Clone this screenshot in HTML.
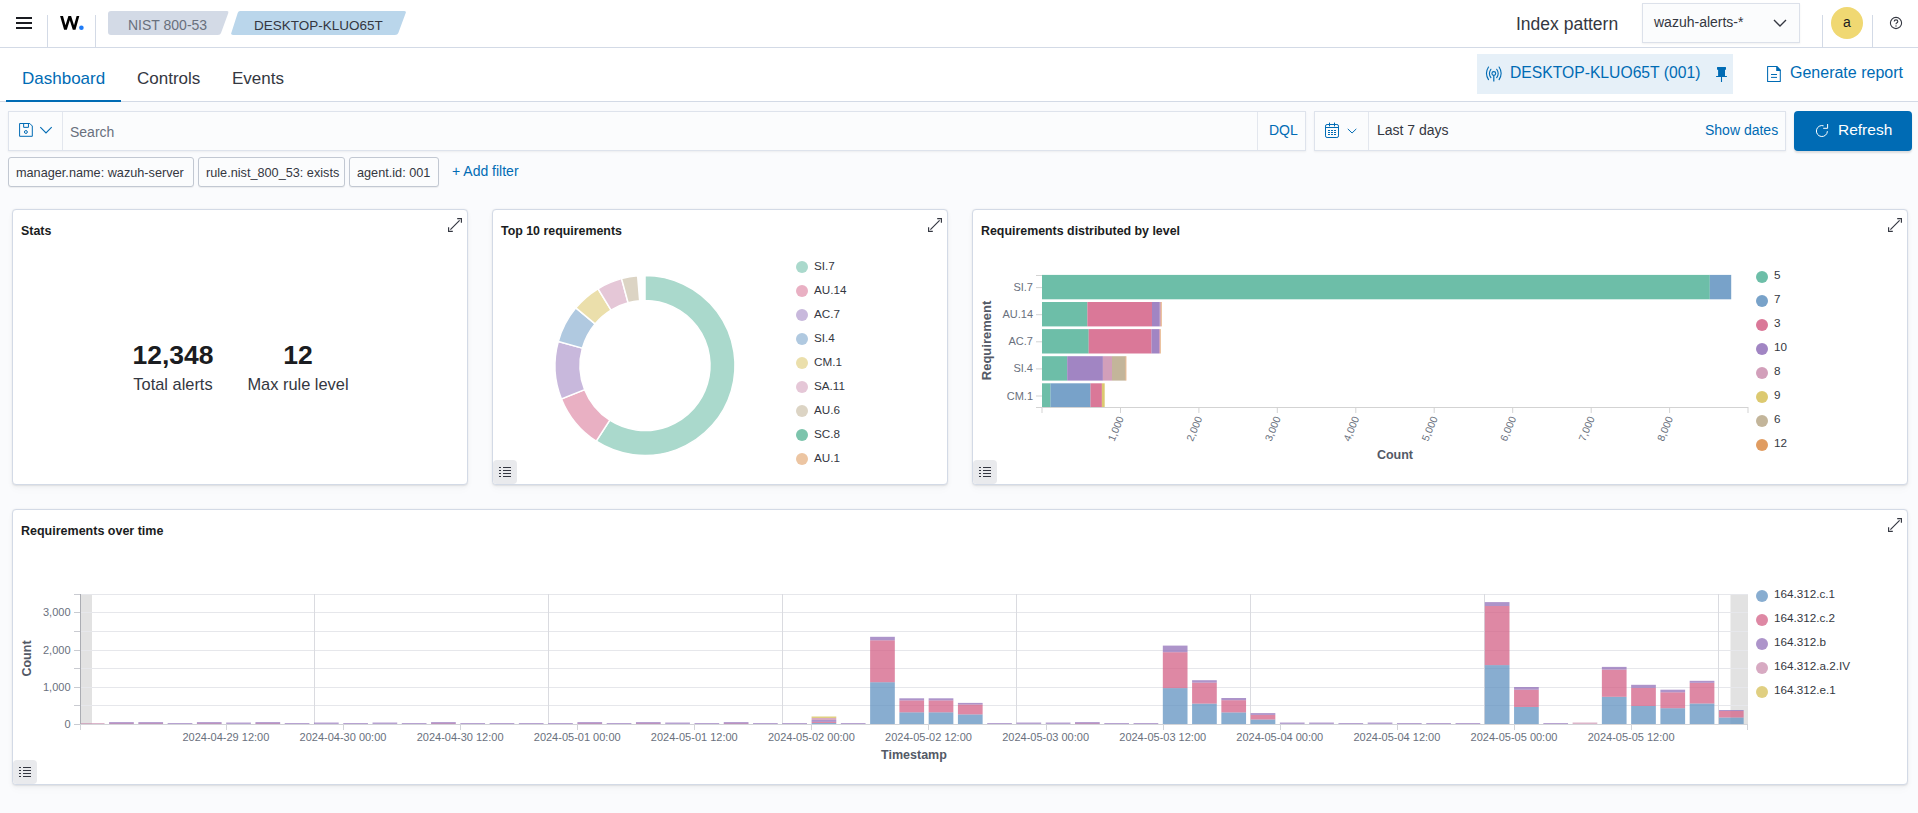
<!DOCTYPE html>
<html><head><meta charset="utf-8">
<style>
*{box-sizing:border-box;margin:0;padding:0}
html,body{width:1918px;height:813px;overflow:hidden}
body{background:#FAFBFD;font-family:"Liberation Sans",sans-serif;color:#343741;position:relative}
.a{position:absolute;white-space:nowrap}
.hdr{position:absolute;left:0;top:0;width:1918px;height:48px;background:#fff;border-bottom:1px solid #D3DAE6}
.tabs{position:absolute;left:0;top:48px;width:1918px;height:54px;background:#fff;border-bottom:1px solid #D3DAE6}
.vsep{position:absolute;top:15px;width:1px;height:33px;background:#D3DAE6}
.panel{position:absolute;background:#fff;border:1px solid #D3DAE6;border-radius:4px;box-shadow:0 .7px 1.4px rgba(0,0,0,.07),0 1.9px 4px rgba(0,0,0,.04),0 4.5px 10px rgba(0,0,0,.02)}
.ptitle{position:absolute;left:8px;top:13px;font-size:12.4px;font-weight:bold;color:#1a1c21}
.exp{position:absolute;width:14px;height:14px}
.listbtn{position:absolute;width:24px;height:24px;background:#E9EAED;border-radius:4px}
.pill{position:absolute;top:157px;height:30px;background:#FBFCFD;border:1px solid #C2C8D2;border-radius:3px;font-size:12.7px;line-height:30px;padding-left:7px;color:#343741;box-shadow:0 1px 1px rgba(0,0,0,.06)}
.box{position:absolute;background:#FBFCFD;border:1px solid #DEE3EC;box-shadow:0 1px 2px rgba(0,0,0,.06)}
</style></head><body>
<div class="hdr"></div>
<!-- hamburger -->
<div class="a" style="left:16px;top:17px;width:16px;height:2px;background:#1a1c21"></div>
<div class="a" style="left:16px;top:22px;width:16px;height:2px;background:#1a1c21"></div>
<div class="a" style="left:16px;top:27px;width:16px;height:2px;background:#1a1c21"></div>
<div class="vsep" style="left:47px"></div>
<div class="vsep" style="left:95px"></div>
<svg class="a" style="left:0;top:0" width="90" height="40"><path d="M60.1 16 L63 16 L65.5 25.2 L68.4 16 L71.1 16 L74.05 25.26 L76.6 16 L79.3 16 L75.5 29.8 L72.8 29.8 L69.77 20.3 L66.8 29.8 L64.1 29.8Z" fill="#000"/><circle cx="81.4" cy="27.7" r="2.3" fill="#1E7BF7"/></svg>

<svg class="a" style="left:100px;top:8px" width="320" height="30">
<path d="M11 3 H127 Q129 3 128.3 5 L121 25 Q120.4 27 118 27 H11 Q8 27 8 24 V6 Q8 3 11 3Z" fill="#D3DAE6"/>
<path d="M140 3 H304 Q306.5 3 305.7 5 L298.3 25 Q297.6 27 295 27 H133 Q130.5 27 131.3 25 L137.7 5 Q138.4 3 140 3Z" fill="#BAD6EB"/>
</svg>
<div class="a" style="left:128px;top:16.5px;font-size:14px;line-height:17px;color:#69707D">NIST 800-53</div>
<div class="a" style="left:254px;top:16.5px;font-size:13.5px;line-height:17px;color:#343741">DESKTOP-KLUO65T</div>
<div class="a" style="left:1516px;top:14px;font-size:17.5px;line-height:20px;color:#343741">Index pattern</div>
<div class="box" style="left:1642px;top:3px;width:158px;height:40px;border-color:#DCE1EA"></div>
<div class="a" style="left:1654px;top:14px;font-size:14px;line-height:17px;color:#343741">wazuh-alerts-*</div>
<svg class="a" style="left:1772px;top:17px" width="16" height="12"><path d="M2 3 L8 9 L14 3" fill="none" stroke="#343741" stroke-width="1.4"/></svg>
<div class="vsep" style="left:1822px"></div>
<div class="a" style="left:1831px;top:7px;width:32px;height:32px;border-radius:50%;background:#F0D872;text-align:center;font-size:14px;line-height:31px;color:#1a1c21">a</div>
<div class="vsep" style="left:1872px"></div>
<svg class="a" style="left:1888px;top:15px" width="16" height="16"><circle cx="8" cy="8" r="5.6" fill="none" stroke="#343741" stroke-width="1.1"/><path d="M6.2 6.6 Q6.2 4.9 8 4.9 Q9.8 4.9 9.8 6.5 Q9.8 7.5 8.6 8 Q8 8.3 8 9.2" fill="none" stroke="#343741" stroke-width="1.1"/><circle cx="8" cy="11" r=".7" fill="#343741"/></svg>

<div class="tabs"></div>
<div class="a" style="left:22px;top:69px;font-size:17px;line-height:20px;color:#006BB4">Dashboard</div>
<div class="a" style="left:6px;top:100px;width:115px;height:2px;background:#006BB4"></div>
<div class="a" style="left:137px;top:69px;font-size:17px;line-height:20px;color:#343741">Controls</div>
<div class="a" style="left:232px;top:69px;font-size:17px;line-height:20px;color:#343741">Events</div>
<div class="a" style="left:1477px;top:54px;width:256px;height:40px;background:#E6F0F8"></div>
<svg class="a" style="left:1485px;top:66px" width="18" height="18">
<circle cx="8.8" cy="7.5" r="1.9" fill="none" stroke="#006BB4" stroke-width="1.1"/><path d="M8.8 9.4 V15.4" stroke="#006BB4" stroke-width="1.2"/>
<path d="M5.9 3.3 Q2.9 7.4 5.9 11.6 M11.7 3.3 Q14.7 7.4 11.7 11.6 M3.5 1 Q-0.6 7.3 3.5 13.6 M14.1 1 Q18.2 7.3 14.1 13.6" fill="none" stroke="#006BB4" stroke-width="1.1" stroke-linecap="round"/></svg>
<div class="a" style="left:1510px;top:63px;font-size:15.7px;line-height:19px;color:#006BB4">DESKTOP-KLUO65T (001)</div>
<svg class="a" style="left:1714px;top:66px" width="16" height="18"><path d="M3.5 1.1 H11.5 Q12 1.1 12 1.6 V3.2 Q12 3.7 11.5 3.7 H11 V10 H12.9 V10.9 H2.1 V10 H4.1 V3.7 H3.5 Q3 3.7 3 3.2 V1.6 Q3 1.1 3.5 1.1Z" fill="#006BB4"/><path d="M7.5 10.9 V16" stroke="#006BB4" stroke-width="1.1"/></svg>
<svg class="a" style="left:1765px;top:65px" width="18" height="18"><path d="M2.6 1.5 H11.8 L15.3 5.2 V16.4 H2.6 Z" fill="none" stroke="#006BB4" stroke-width="1.05" stroke-linejoin="round"/><path d="M11.2 1.1 L12 1.1 L15.7 5 V5.9 H11.2 Z" fill="#006BB4"/><path d="M6 9.5 H12 M6 12.4 H12" stroke="#006BB4" stroke-width="1"/></svg>
<div class="a" style="left:1790px;top:63px;font-size:16px;line-height:19px;color:#006BB4">Generate report</div>

<!-- search -->
<div class="box" style="left:8px;top:111px;width:1298px;height:40px"></div>
<div class="a" style="left:62px;top:112px;width:1px;height:38px;background:#E3E7EE"></div>
<svg class="a" style="left:17px;top:121px" width="40" height="20">
<path d="M2.6 2.5 H12.8 L15.3 5 V15.3 H2.6 Z" fill="none" stroke="#006BB4" stroke-width="1" stroke-linejoin="round"/><path d="M6.65 2.5 V6.35 H11.45 V2.5" fill="none" stroke="#006BB4" stroke-width="1"/><circle cx="8.9" cy="11" r="1.45" fill="none" stroke="#006BB4" stroke-width="1"/>
<path d="M23.3 6.2 L29 11.9 L34.7 6.2" fill="none" stroke="#006BB4" stroke-width="1.1"/></svg>
<div class="a" style="left:70px;top:124px;font-size:14px;line-height:17px;color:#69707D">Search</div>
<div class="a" style="left:1257px;top:112px;width:1px;height:38px;background:#E3E7EE"></div>
<div class="a" style="left:1269px;top:122px;font-size:14px;line-height:17px;color:#006BB4">DQL</div>
<div class="box" style="left:1314px;top:111px;width:472px;height:40px"></div>
<div class="a" style="left:1368px;top:112px;width:1px;height:38px;background:#E3E7EE"></div>
<svg class="a" style="left:1323px;top:121px" width="40" height="20">
<rect x="2.5" y="3.5" width="13" height="13" rx="1.6" fill="none" stroke="#006BB4" stroke-width="1"/><path d="M2.5 6.5 H15.5" stroke="#006BB4" stroke-width="1"/><path d="M6.5 2 V5 M11.5 2 V5" stroke="#006BB4" stroke-width="1" stroke-linecap="round"/>
<path d="M5 9.5 H7 M8 9.5 H10 M11 9.5 H13 M5 11.5 H7 M8 11.5 H10 M11 11.5 H13 M5 13.5 H7 M8 13.5 H10 M11 13.5 H13" stroke="#006BB4" stroke-width="1"/>
<path d="M24.8 7.9 L29.05 12 L33.3 7.9" fill="none" stroke="#006BB4" stroke-width="1"/></svg>
<div class="a" style="left:1377px;top:122px;font-size:14px;line-height:17px;color:#343741">Last 7 days</div>
<div class="a" style="left:1705px;top:122px;font-size:14px;line-height:17px;color:#006BB4">Show dates</div>
<div class="a" style="left:1794px;top:111px;width:118px;height:40px;background:#006BB4;border-radius:4px;box-shadow:0 2px 2px rgba(0,0,0,.12)"></div>
<svg class="a" style="left:1814px;top:122px" width="18" height="18"><path d="M9.6 3.8 A5.5 5.5 0 1 0 13.4 9.2" fill="none" stroke="#fff" stroke-width="1"/><path d="M9.2 6.3 H13.6 V2" fill="none" stroke="#fff" stroke-width="1"/></svg>
<div class="a" style="left:1838px;top:120px;font-size:15.5px;line-height:19px;color:#fff">Refresh</div>

<!-- filters -->
<div class="pill" style="left:8px;width:186px">manager.name: wazuh-server</div>
<div class="pill" style="left:198px;width:147px">rule.nist_800_53: exists</div>
<div class="pill" style="left:349px;width:90px">agent.id: 001</div>
<div class="a" style="left:452px;top:163px;font-size:14px;line-height:17px;color:#006BB4">+ Add filter</div>

<div class="panel" style="left:12px;top:209px;width:456px;height:276px"><div class="ptitle" style="top:14px">Stats</div></div>
<svg class="exp" style="left:448px;top:218px" width="14" height="14" viewBox="0 0 14 14"><path d="M9.2 0.6 H13.4 V4.8 M11.6 2.4 L2.4 11.6 M0.6 9.2 V13.4 H4.8" fill="none" stroke="#343741" stroke-width="1.15"/></svg>
<div class="a" style="left:132px;top:339px;width:82px;text-align:center;font-size:26.5px;font-weight:bold;line-height:32px;color:#1a1c21">12,348</div>
<div class="a" style="left:122px;top:374px;width:102px;text-align:center;font-size:16.4px;line-height:20px;color:#343741">Total alerts</div>
<div class="a" style="left:248px;top:339px;width:100px;text-align:center;font-size:26.5px;font-weight:bold;line-height:32px;color:#1a1c21">12</div>
<div class="a" style="left:238px;top:374px;width:120px;text-align:center;font-size:16.4px;line-height:20px;color:#343741">Max rule level</div>
<div class="panel" style="left:492px;top:209px;width:456px;height:276px"><div class="ptitle" style="top:14px">Top 10 requirements</div></div>
<svg class="exp" style="left:928px;top:218px" width="14" height="14" viewBox="0 0 14 14"><path d="M9.2 0.6 H13.4 V4.8 M11.6 2.4 L2.4 11.6 M0.6 9.2 V13.4 H4.8" fill="none" stroke="#343741" stroke-width="1.15"/></svg>
<div class="listbtn" style="left:493px;top:460px"></div><svg class="a" style="left:493px;top:460px" width="23" height="23"><path d="M6 7.5 H8 M10 7.5 H18" stroke="#343741" stroke-width="1.1"/><path d="M6 10.5 H8 M10 10.5 H18" stroke="#343741" stroke-width="1.1"/><path d="M6 13.5 H8 M10 13.5 H18" stroke="#343741" stroke-width="1.1"/><path d="M6 16.5 H8 M10 16.5 H18" stroke="#343741" stroke-width="1.1"/></svg>
<svg class="a" style="left:0;top:0" width="1918" height="813"><path d="M645.00 275.50 A90 90 0 1 1 596.25 441.15 L609.79 420.14 A65 65 0 1 0 645.00 300.50 Z" fill="#AAD9CC" stroke="#fff" stroke-width="1.5"/><path d="M596.25 441.15 A90 90 0 0 1 561.44 398.92 L584.65 389.64 A65 65 0 0 0 609.79 420.14 Z" fill="#E9B0C3" stroke="#fff" stroke-width="1.5"/><path d="M561.44 398.92 A90 90 0 0 1 558.27 341.45 L582.36 348.13 A65 65 0 0 0 584.65 389.64 Z" fill="#C8B8DC" stroke="#fff" stroke-width="1.5"/><path d="M558.27 341.45 A90 90 0 0 1 575.85 307.89 L595.06 323.89 A65 65 0 0 0 582.36 348.13 Z" fill="#B0C9E0" stroke="#fff" stroke-width="1.5"/><path d="M575.85 307.89 A90 90 0 0 1 597.98 288.76 L611.04 310.08 A65 65 0 0 0 595.06 323.89 Z" fill="#EBDFAB" stroke="#fff" stroke-width="1.5"/><path d="M597.98 288.76 A90 90 0 0 1 621.55 278.61 L628.07 302.74 A65 65 0 0 0 611.04 310.08 Z" fill="#E5C7D7" stroke="#fff" stroke-width="1.5"/><path d="M621.55 278.61 A90 90 0 0 1 637.63 275.80 L639.67 300.72 A65 65 0 0 0 628.07 302.74 Z" fill="#DCD4C4" stroke="#fff" stroke-width="1.5"/></svg>
<div class="a" style="left:796px;top:261px;width:12px;height:12px;border-radius:50%;background:#AAD9CC"></div>
<div class="a" style="left:814px;top:259px;font-size:11.7px;line-height:14px;color:#343741">SI.7</div>
<div class="a" style="left:796px;top:285px;width:12px;height:12px;border-radius:50%;background:#E9B0C3"></div>
<div class="a" style="left:814px;top:283px;font-size:11.7px;line-height:14px;color:#343741">AU.14</div>
<div class="a" style="left:796px;top:309px;width:12px;height:12px;border-radius:50%;background:#C8B8DC"></div>
<div class="a" style="left:814px;top:307px;font-size:11.7px;line-height:14px;color:#343741">AC.7</div>
<div class="a" style="left:796px;top:333px;width:12px;height:12px;border-radius:50%;background:#B0C9E0"></div>
<div class="a" style="left:814px;top:331px;font-size:11.7px;line-height:14px;color:#343741">SI.4</div>
<div class="a" style="left:796px;top:357px;width:12px;height:12px;border-radius:50%;background:#EBDFAB"></div>
<div class="a" style="left:814px;top:355px;font-size:11.7px;line-height:14px;color:#343741">CM.1</div>
<div class="a" style="left:796px;top:381px;width:12px;height:12px;border-radius:50%;background:#E5C7D7"></div>
<div class="a" style="left:814px;top:379px;font-size:11.7px;line-height:14px;color:#343741">SA.11</div>
<div class="a" style="left:796px;top:405px;width:12px;height:12px;border-radius:50%;background:#DCD4C4"></div>
<div class="a" style="left:814px;top:403px;font-size:11.7px;line-height:14px;color:#343741">AU.6</div>
<div class="a" style="left:796px;top:429px;width:12px;height:12px;border-radius:50%;background:#7CC4AC"></div>
<div class="a" style="left:814px;top:427px;font-size:11.7px;line-height:14px;color:#343741">SC.8</div>
<div class="a" style="left:796px;top:453px;width:12px;height:12px;border-radius:50%;background:#ECC5A2"></div>
<div class="a" style="left:814px;top:451px;font-size:11.7px;line-height:14px;color:#343741">AU.1</div>
<div class="panel" style="left:972px;top:209px;width:936px;height:276px"><div class="ptitle" style="top:14px">Requirements distributed by level</div></div>
<svg class="exp" style="left:1888px;top:218px" width="14" height="14" viewBox="0 0 14 14"><path d="M9.2 0.6 H13.4 V4.8 M11.6 2.4 L2.4 11.6 M0.6 9.2 V13.4 H4.8" fill="none" stroke="#343741" stroke-width="1.15"/></svg>
<div class="listbtn" style="left:973px;top:460px"></div><svg class="a" style="left:973px;top:460px" width="23" height="23"><path d="M6 7.5 H8 M10 7.5 H18" stroke="#343741" stroke-width="1.1"/><path d="M6 10.5 H8 M10 10.5 H18" stroke="#343741" stroke-width="1.1"/><path d="M6 13.5 H8 M10 13.5 H18" stroke="#343741" stroke-width="1.1"/><path d="M6 16.5 H8 M10 16.5 H18" stroke="#343741" stroke-width="1.1"/></svg>
<svg class="a" style="left:0;top:0" width="1918" height="813" font-family="Liberation Sans"><rect x="1042.00" y="274.90" width="667.80" height="24.4" fill="#54B399" fill-opacity="0.85"/><rect x="1709.80" y="274.90" width="21.40" height="24.4" fill="#6092C0" fill-opacity="0.85"/><line x1="1036" x2="1042" y1="287.6" y2="287.6" stroke="#D3D3D3" stroke-width="1"/><text x="1033" y="291.1" font-size="11" fill="#69707D" text-anchor="end">SI.7</text><rect x="1042.00" y="302.00" width="45.40" height="24.4" fill="#54B399" fill-opacity="0.85"/><rect x="1087.40" y="302.00" width="64.60" height="24.4" fill="#D36086" fill-opacity="0.85"/><rect x="1152.00" y="302.00" width="7.80" height="24.4" fill="#9170B8" fill-opacity="0.85"/><rect x="1159.80" y="302.00" width="1.00" height="24.4" fill="#CA8EAE" fill-opacity="0.85"/><rect x="1160.80" y="302.00" width="0.80" height="24.4" fill="#DA8B45" fill-opacity="0.85"/><line x1="1036" x2="1042" y1="314.7" y2="314.7" stroke="#D3D3D3" stroke-width="1"/><text x="1033" y="318.2" font-size="11" fill="#69707D" text-anchor="end">AU.14</text><rect x="1042.00" y="329.10" width="46.70" height="24.4" fill="#54B399" fill-opacity="0.85"/><rect x="1088.70" y="329.10" width="62.80" height="24.4" fill="#D36086" fill-opacity="0.85"/><rect x="1151.50" y="329.10" width="7.50" height="24.4" fill="#9170B8" fill-opacity="0.85"/><rect x="1159.00" y="329.10" width="1.00" height="24.4" fill="#CA8EAE" fill-opacity="0.85"/><rect x="1160.00" y="329.10" width="0.60" height="24.4" fill="#DA8B45" fill-opacity="0.85"/><line x1="1036" x2="1042" y1="341.8" y2="341.8" stroke="#D3D3D3" stroke-width="1"/><text x="1033" y="345.3" font-size="11" fill="#69707D" text-anchor="end">AC.7</text><rect x="1042.00" y="356.20" width="25.20" height="24.4" fill="#54B399" fill-opacity="0.85"/><rect x="1067.20" y="356.20" width="35.70" height="24.4" fill="#9170B8" fill-opacity="0.85"/><rect x="1102.90" y="356.20" width="9.10" height="24.4" fill="#CA8EAE" fill-opacity="0.85"/><rect x="1112.00" y="356.20" width="13.60" height="24.4" fill="#B9A888" fill-opacity="0.85"/><rect x="1125.60" y="356.20" width="0.70" height="24.4" fill="#DA8B45" fill-opacity="0.85"/><line x1="1036" x2="1042" y1="368.9" y2="368.9" stroke="#D3D3D3" stroke-width="1"/><text x="1033" y="372.4" font-size="11" fill="#69707D" text-anchor="end">SI.4</text><rect x="1042.00" y="383.30" width="8.50" height="24.4" fill="#54B399" fill-opacity="0.85"/><rect x="1050.50" y="383.30" width="40.00" height="24.4" fill="#6092C0" fill-opacity="0.85"/><rect x="1090.50" y="383.30" width="11.40" height="24.4" fill="#D36086" fill-opacity="0.85"/><rect x="1101.90" y="383.30" width="2.80" height="24.4" fill="#D6BF57" fill-opacity="0.85"/><line x1="1036" x2="1042" y1="396.0" y2="396.0" stroke="#D3D3D3" stroke-width="1"/><text x="1033" y="399.5" font-size="11" fill="#69707D" text-anchor="end">CM.1</text><line x1="1036" x2="1042" y1="275.5" y2="275.5" stroke="#D3D3D3"/><line x1="1036" x2="1042" y1="407.5" y2="407.5" stroke="#D3D3D3"/><line x1="1042" x2="1748" y1="407.5" y2="407.5" stroke="#D3D3D3"/><line x1="1042.0" x2="1042.0" y1="407" y2="413" stroke="#D3D3D3"/><line x1="1120.5" x2="1120.5" y1="407" y2="413" stroke="#D3D3D3"/><text transform="translate(1121.2 417) rotate(-68)" font-size="10.3" fill="#69707D" text-anchor="end" dy="3">1,000</text><line x1="1198.9" x2="1198.9" y1="407" y2="413" stroke="#D3D3D3"/><text transform="translate(1199.7 417) rotate(-68)" font-size="10.3" fill="#69707D" text-anchor="end" dy="3">2,000</text><line x1="1277.3" x2="1277.3" y1="407" y2="413" stroke="#D3D3D3"/><text transform="translate(1278.1 417) rotate(-68)" font-size="10.3" fill="#69707D" text-anchor="end" dy="3">3,000</text><line x1="1355.8" x2="1355.8" y1="407" y2="413" stroke="#D3D3D3"/><text transform="translate(1356.6 417) rotate(-68)" font-size="10.3" fill="#69707D" text-anchor="end" dy="3">4,000</text><line x1="1434.2" x2="1434.2" y1="407" y2="413" stroke="#D3D3D3"/><text transform="translate(1435.0 417) rotate(-68)" font-size="10.3" fill="#69707D" text-anchor="end" dy="3">5,000</text><line x1="1512.7" x2="1512.7" y1="407" y2="413" stroke="#D3D3D3"/><text transform="translate(1513.5 417) rotate(-68)" font-size="10.3" fill="#69707D" text-anchor="end" dy="3">6,000</text><line x1="1591.2" x2="1591.2" y1="407" y2="413" stroke="#D3D3D3"/><text transform="translate(1592.0 417) rotate(-68)" font-size="10.3" fill="#69707D" text-anchor="end" dy="3">7,000</text><line x1="1669.6" x2="1669.6" y1="407" y2="413" stroke="#D3D3D3"/><text transform="translate(1670.4 417) rotate(-68)" font-size="10.3" fill="#69707D" text-anchor="end" dy="3">8,000</text><line x1="1748" x2="1748" y1="407" y2="413" stroke="#D3D3D3"/><text transform="translate(991 340.5) rotate(-90)" font-size="13" font-weight="bold" fill="#535966" text-anchor="middle">Requirement</text><text x="1395" y="459" font-size="12.5" font-weight="bold" fill="#535966" text-anchor="middle">Count</text></svg>
<div class="a" style="left:1756px;top:270.5px;width:12px;height:12px;border-radius:50%;background:#54B399;opacity:.85"></div>
<div class="a" style="left:1774px;top:267.5px;font-size:11.7px;line-height:14px;color:#343741">5</div>
<div class="a" style="left:1756px;top:294.5px;width:12px;height:12px;border-radius:50%;background:#6092C0;opacity:.85"></div>
<div class="a" style="left:1774px;top:291.5px;font-size:11.7px;line-height:14px;color:#343741">7</div>
<div class="a" style="left:1756px;top:318.5px;width:12px;height:12px;border-radius:50%;background:#D36086;opacity:.85"></div>
<div class="a" style="left:1774px;top:315.5px;font-size:11.7px;line-height:14px;color:#343741">3</div>
<div class="a" style="left:1756px;top:342.5px;width:12px;height:12px;border-radius:50%;background:#9170B8;opacity:.85"></div>
<div class="a" style="left:1774px;top:339.5px;font-size:11.7px;line-height:14px;color:#343741">10</div>
<div class="a" style="left:1756px;top:366.5px;width:12px;height:12px;border-radius:50%;background:#CA8EAE;opacity:.85"></div>
<div class="a" style="left:1774px;top:363.5px;font-size:11.7px;line-height:14px;color:#343741">8</div>
<div class="a" style="left:1756px;top:390.5px;width:12px;height:12px;border-radius:50%;background:#D6BF57;opacity:.85"></div>
<div class="a" style="left:1774px;top:387.5px;font-size:11.7px;line-height:14px;color:#343741">9</div>
<div class="a" style="left:1756px;top:414.5px;width:12px;height:12px;border-radius:50%;background:#B9A888;opacity:.85"></div>
<div class="a" style="left:1774px;top:411.5px;font-size:11.7px;line-height:14px;color:#343741">6</div>
<div class="a" style="left:1756px;top:438.5px;width:12px;height:12px;border-radius:50%;background:#DA8B45;opacity:.85"></div>
<div class="a" style="left:1774px;top:435.5px;font-size:11.7px;line-height:14px;color:#343741">12</div>
<div class="panel" style="left:12px;top:509px;width:1896px;height:276px"><div class="ptitle" style="top:14px;font-size:12.5px">Requirements over time</div></div>
<svg class="exp" style="left:1888px;top:518px" width="14" height="14" viewBox="0 0 14 14"><path d="M9.2 0.6 H13.4 V4.8 M11.6 2.4 L2.4 11.6 M0.6 9.2 V13.4 H4.8" fill="none" stroke="#343741" stroke-width="1.15"/></svg>
<div class="listbtn" style="left:13px;top:760px"></div><svg class="a" style="left:13px;top:760px" width="23" height="23"><path d="M6 7.5 H8 M10 7.5 H18" stroke="#343741" stroke-width="1.1"/><path d="M6 10.5 H8 M10 10.5 H18" stroke="#343741" stroke-width="1.1"/><path d="M6 13.5 H8 M10 13.5 H18" stroke="#343741" stroke-width="1.1"/><path d="M6 16.5 H8 M10 16.5 H18" stroke="#343741" stroke-width="1.1"/></svg>
<svg class="a" style="left:0;top:0" width="1918" height="813" font-family="Liberation Sans"><rect x="81" y="594" width="11" height="130" fill="#E2E2E2"/><rect x="1730.5" y="594" width="17.5" height="130" fill="#E2E2E2"/><line x1="81" x2="1748" y1="724.5" y2="724.5" stroke="#E6E7EB"/><line x1="74" x2="81" y1="724.5" y2="724.5" stroke="#C9CBD1"/><line x1="81" x2="1748" y1="705.5" y2="705.5" stroke="#E6E7EB"/><line x1="74" x2="81" y1="705.5" y2="705.5" stroke="#C9CBD1"/><line x1="81" x2="1748" y1="687.5" y2="687.5" stroke="#E6E7EB"/><line x1="74" x2="81" y1="687.5" y2="687.5" stroke="#C9CBD1"/><line x1="81" x2="1748" y1="668.5" y2="668.5" stroke="#E6E7EB"/><line x1="74" x2="81" y1="668.5" y2="668.5" stroke="#C9CBD1"/><line x1="81" x2="1748" y1="650.5" y2="650.5" stroke="#E6E7EB"/><line x1="74" x2="81" y1="650.5" y2="650.5" stroke="#C9CBD1"/><line x1="81" x2="1748" y1="631.5" y2="631.5" stroke="#E6E7EB"/><line x1="74" x2="81" y1="631.5" y2="631.5" stroke="#C9CBD1"/><line x1="81" x2="1748" y1="612.5" y2="612.5" stroke="#E6E7EB"/><line x1="74" x2="81" y1="612.5" y2="612.5" stroke="#C9CBD1"/><line x1="81" x2="1748" y1="594.5" y2="594.5" stroke="#E6E7EB"/><line x1="74" x2="81" y1="594.5" y2="594.5" stroke="#C9CBD1"/><line x1="314.5" x2="314.5" y1="594" y2="724" stroke="#DADBE0"/><line x1="548.5" x2="548.5" y1="594" y2="724" stroke="#DADBE0"/><line x1="782.5" x2="782.5" y1="594" y2="724" stroke="#DADBE0"/><line x1="1016.5" x2="1016.5" y1="594" y2="724" stroke="#DADBE0"/><line x1="1250.5" x2="1250.5" y1="594" y2="724" stroke="#DADBE0"/><line x1="1484.5" x2="1484.5" y1="594" y2="724" stroke="#DADBE0"/><line x1="1718.5" x2="1718.5" y1="594" y2="724" stroke="#DADBE0"/><line x1="80.5" x2="80.5" y1="594" y2="724" stroke="#ABADB3"/><text x="70.5" y="728.0" font-size="11" fill="#69707D" text-anchor="end">0</text><text x="70.5" y="690.8" font-size="11" fill="#69707D" text-anchor="end">1,000</text><text x="70.5" y="653.5" font-size="11" fill="#69707D" text-anchor="end">2,000</text><text x="70.5" y="616.3" font-size="11" fill="#69707D" text-anchor="end">3,000</text><rect x="81.00" y="723.00" width="23.53" height="1.00" fill="#CA8EAE" fill-opacity="0.65"/><rect x="109.10" y="722.00" width="24.70" height="2.00" fill="#9170B8" fill-opacity="0.65"/><rect x="109.10" y="723.3" width="24.70" height="0.7" fill="#D36086" fill-opacity="0.35"/><rect x="138.37" y="722.00" width="24.70" height="2.00" fill="#9170B8" fill-opacity="0.65"/><rect x="138.37" y="723.3" width="24.70" height="0.7" fill="#D36086" fill-opacity="0.35"/><rect x="167.64" y="723.00" width="24.70" height="1.00" fill="#9170B8" fill-opacity="0.65"/><rect x="196.91" y="722.00" width="24.70" height="2.00" fill="#9170B8" fill-opacity="0.65"/><rect x="196.91" y="723.3" width="24.70" height="0.7" fill="#D36086" fill-opacity="0.35"/><rect x="226.18" y="722.50" width="24.70" height="1.50" fill="#9170B8" fill-opacity="0.65"/><rect x="255.45" y="722.00" width="24.70" height="2.00" fill="#9170B8" fill-opacity="0.65"/><rect x="255.45" y="723.3" width="24.70" height="0.7" fill="#D36086" fill-opacity="0.35"/><rect x="284.72" y="723.00" width="24.70" height="1.00" fill="#9170B8" fill-opacity="0.65"/><rect x="313.99" y="722.50" width="24.70" height="1.50" fill="#9170B8" fill-opacity="0.65"/><rect x="343.26" y="723.00" width="24.70" height="1.00" fill="#9170B8" fill-opacity="0.65"/><rect x="372.53" y="722.50" width="24.70" height="1.50" fill="#9170B8" fill-opacity="0.65"/><rect x="401.80" y="723.00" width="24.70" height="1.00" fill="#9170B8" fill-opacity="0.65"/><rect x="431.07" y="722.00" width="24.70" height="2.00" fill="#9170B8" fill-opacity="0.65"/><rect x="431.07" y="723.3" width="24.70" height="0.7" fill="#D36086" fill-opacity="0.35"/><rect x="460.34" y="723.00" width="24.70" height="1.00" fill="#9170B8" fill-opacity="0.65"/><rect x="489.61" y="723.00" width="24.70" height="1.00" fill="#9170B8" fill-opacity="0.65"/><rect x="518.88" y="723.00" width="24.70" height="1.00" fill="#9170B8" fill-opacity="0.65"/><rect x="548.15" y="723.00" width="24.70" height="1.00" fill="#9170B8" fill-opacity="0.65"/><rect x="577.42" y="722.00" width="24.70" height="2.00" fill="#9170B8" fill-opacity="0.65"/><rect x="577.42" y="723.3" width="24.70" height="0.7" fill="#D36086" fill-opacity="0.35"/><rect x="606.69" y="723.00" width="24.70" height="1.00" fill="#9170B8" fill-opacity="0.65"/><rect x="635.96" y="722.00" width="24.70" height="2.00" fill="#9170B8" fill-opacity="0.65"/><rect x="635.96" y="723.3" width="24.70" height="0.7" fill="#D36086" fill-opacity="0.35"/><rect x="665.23" y="722.50" width="24.70" height="1.50" fill="#9170B8" fill-opacity="0.65"/><rect x="694.50" y="723.00" width="24.70" height="1.00" fill="#9170B8" fill-opacity="0.65"/><rect x="723.77" y="722.00" width="24.70" height="2.00" fill="#9170B8" fill-opacity="0.65"/><rect x="723.77" y="723.3" width="24.70" height="0.7" fill="#D36086" fill-opacity="0.35"/><rect x="753.04" y="723.00" width="24.70" height="1.00" fill="#9170B8" fill-opacity="0.65"/><rect x="782.31" y="723.00" width="24.70" height="1.00" fill="#9170B8" fill-opacity="0.65"/><rect x="811.58" y="723.00" width="24.70" height="1.00" fill="#6092C0" fill-opacity="0.75"/><rect x="811.58" y="721.90" width="24.70" height="1.10" fill="#D36086" fill-opacity="0.75"/><rect x="811.58" y="720.00" width="24.70" height="1.90" fill="#9170B8" fill-opacity="0.75"/><rect x="811.58" y="718.00" width="24.70" height="2.00" fill="#CA8EAE" fill-opacity="0.75"/><rect x="811.58" y="716.50" width="24.70" height="1.50" fill="#D6BF57" fill-opacity="0.75"/><rect x="840.85" y="723.00" width="24.70" height="1.00" fill="#9170B8" fill-opacity="0.65"/><rect x="870.12" y="682.20" width="24.70" height="41.80" fill="#6092C0" fill-opacity="0.75"/><rect x="870.12" y="640.30" width="24.70" height="41.90" fill="#D36086" fill-opacity="0.75"/><rect x="870.12" y="636.80" width="24.70" height="3.50" fill="#9170B8" fill-opacity="0.75"/><rect x="899.39" y="712.30" width="24.70" height="11.70" fill="#6092C0" fill-opacity="0.75"/><rect x="899.39" y="700.40" width="24.70" height="11.90" fill="#D36086" fill-opacity="0.75"/><rect x="899.39" y="698.30" width="24.70" height="2.10" fill="#9170B8" fill-opacity="0.75"/><rect x="928.66" y="712.30" width="24.70" height="11.70" fill="#6092C0" fill-opacity="0.75"/><rect x="928.66" y="700.40" width="24.70" height="11.90" fill="#D36086" fill-opacity="0.75"/><rect x="928.66" y="698.30" width="24.70" height="2.10" fill="#9170B8" fill-opacity="0.75"/><rect x="957.93" y="714.40" width="24.70" height="9.60" fill="#6092C0" fill-opacity="0.75"/><rect x="957.93" y="704.50" width="24.70" height="9.90" fill="#D36086" fill-opacity="0.75"/><rect x="957.93" y="702.90" width="24.70" height="1.60" fill="#9170B8" fill-opacity="0.75"/><rect x="987.20" y="723.00" width="24.70" height="1.00" fill="#9170B8" fill-opacity="0.65"/><rect x="1016.47" y="722.50" width="24.70" height="1.50" fill="#9170B8" fill-opacity="0.65"/><rect x="1045.74" y="722.50" width="24.70" height="1.50" fill="#9170B8" fill-opacity="0.65"/><rect x="1075.01" y="722.00" width="24.70" height="2.00" fill="#9170B8" fill-opacity="0.65"/><rect x="1075.01" y="723.3" width="24.70" height="0.7" fill="#D36086" fill-opacity="0.35"/><rect x="1104.28" y="723.00" width="24.70" height="1.00" fill="#9170B8" fill-opacity="0.65"/><rect x="1133.55" y="723.00" width="24.70" height="1.00" fill="#9170B8" fill-opacity="0.65"/><rect x="1162.82" y="688.10" width="24.70" height="35.90" fill="#6092C0" fill-opacity="0.75"/><rect x="1162.82" y="652.20" width="24.70" height="35.90" fill="#D36086" fill-opacity="0.75"/><rect x="1162.82" y="645.60" width="24.70" height="6.60" fill="#9170B8" fill-opacity="0.75"/><rect x="1192.09" y="703.60" width="24.70" height="20.40" fill="#6092C0" fill-opacity="0.75"/><rect x="1192.09" y="682.60" width="24.70" height="21.00" fill="#D36086" fill-opacity="0.75"/><rect x="1192.09" y="680.20" width="24.70" height="2.40" fill="#9170B8" fill-opacity="0.75"/><rect x="1221.36" y="712.40" width="24.70" height="11.60" fill="#6092C0" fill-opacity="0.75"/><rect x="1221.36" y="700.20" width="24.70" height="12.20" fill="#D36086" fill-opacity="0.75"/><rect x="1221.36" y="698.00" width="24.70" height="2.20" fill="#9170B8" fill-opacity="0.75"/><rect x="1250.63" y="719.50" width="24.70" height="4.50" fill="#6092C0" fill-opacity="0.75"/><rect x="1250.63" y="714.90" width="24.70" height="4.60" fill="#D36086" fill-opacity="0.75"/><rect x="1250.63" y="713.10" width="24.70" height="1.80" fill="#9170B8" fill-opacity="0.75"/><rect x="1279.90" y="722.50" width="24.70" height="1.50" fill="#9170B8" fill-opacity="0.65"/><rect x="1309.17" y="722.50" width="24.70" height="1.50" fill="#9170B8" fill-opacity="0.65"/><rect x="1338.44" y="723.00" width="24.70" height="1.00" fill="#9170B8" fill-opacity="0.65"/><rect x="1367.71" y="722.50" width="24.70" height="1.50" fill="#9170B8" fill-opacity="0.65"/><rect x="1396.98" y="723.00" width="24.70" height="1.00" fill="#9170B8" fill-opacity="0.65"/><rect x="1426.25" y="723.00" width="24.70" height="1.00" fill="#9170B8" fill-opacity="0.65"/><rect x="1455.52" y="723.00" width="24.70" height="1.00" fill="#9170B8" fill-opacity="0.65"/><rect x="1484.79" y="665.10" width="24.70" height="58.90" fill="#6092C0" fill-opacity="0.75"/><rect x="1484.79" y="606.00" width="24.70" height="59.10" fill="#D36086" fill-opacity="0.75"/><rect x="1484.79" y="602.10" width="24.70" height="3.90" fill="#9170B8" fill-opacity="0.75"/><rect x="1514.06" y="707.00" width="24.70" height="17.00" fill="#6092C0" fill-opacity="0.75"/><rect x="1514.06" y="689.70" width="24.70" height="17.30" fill="#D36086" fill-opacity="0.75"/><rect x="1514.06" y="687.00" width="24.70" height="2.70" fill="#9170B8" fill-opacity="0.75"/><rect x="1543.33" y="723.00" width="24.70" height="1.00" fill="#9170B8" fill-opacity="0.65"/><rect x="1572.60" y="722.50" width="24.70" height="1.50" fill="#CA8EAE" fill-opacity="0.65"/><rect x="1601.87" y="696.80" width="24.70" height="27.20" fill="#6092C0" fill-opacity="0.75"/><rect x="1601.87" y="669.60" width="24.70" height="27.20" fill="#D36086" fill-opacity="0.75"/><rect x="1601.87" y="666.90" width="24.70" height="2.70" fill="#9170B8" fill-opacity="0.75"/><rect x="1631.14" y="706.00" width="24.70" height="18.00" fill="#6092C0" fill-opacity="0.75"/><rect x="1631.14" y="687.90" width="24.70" height="18.10" fill="#D36086" fill-opacity="0.75"/><rect x="1631.14" y="684.80" width="24.70" height="3.10" fill="#9170B8" fill-opacity="0.75"/><rect x="1660.41" y="708.20" width="24.70" height="15.80" fill="#6092C0" fill-opacity="0.75"/><rect x="1660.41" y="692.30" width="24.70" height="15.90" fill="#D36086" fill-opacity="0.75"/><rect x="1660.41" y="689.70" width="24.70" height="2.60" fill="#9170B8" fill-opacity="0.75"/><rect x="1689.68" y="703.50" width="24.70" height="20.50" fill="#6092C0" fill-opacity="0.75"/><rect x="1689.68" y="682.80" width="24.70" height="20.70" fill="#D36086" fill-opacity="0.75"/><rect x="1689.68" y="680.80" width="24.70" height="2.00" fill="#9170B8" fill-opacity="0.75"/><rect x="1718.95" y="717.50" width="24.70" height="6.50" fill="#6092C0" fill-opacity="0.75"/><rect x="1718.95" y="711.00" width="24.70" height="6.50" fill="#D36086" fill-opacity="0.75"/><rect x="1718.95" y="710.00" width="24.70" height="1.00" fill="#9170B8" fill-opacity="0.75"/><line x1="80.5" x2="1748" y1="724.5" y2="724.5" stroke="#D3D4D8"/><line x1="226.5" x2="226.5" y1="724" y2="730" stroke="#D3D4D8"/><text x="225.9" y="741" font-size="11" fill="#69707D" text-anchor="middle">2024-04-29 12:00</text><line x1="343.5" x2="343.5" y1="724" y2="730" stroke="#D3D4D8"/><text x="343.0" y="741" font-size="11" fill="#69707D" text-anchor="middle">2024-04-30 00:00</text><line x1="460.5" x2="460.5" y1="724" y2="730" stroke="#D3D4D8"/><text x="460.1" y="741" font-size="11" fill="#69707D" text-anchor="middle">2024-04-30 12:00</text><line x1="577.5" x2="577.5" y1="724" y2="730" stroke="#D3D4D8"/><text x="577.2" y="741" font-size="11" fill="#69707D" text-anchor="middle">2024-05-01 00:00</text><line x1="694.5" x2="694.5" y1="724" y2="730" stroke="#D3D4D8"/><text x="694.3" y="741" font-size="11" fill="#69707D" text-anchor="middle">2024-05-01 12:00</text><line x1="811.5" x2="811.5" y1="724" y2="730" stroke="#D3D4D8"/><text x="811.4" y="741" font-size="11" fill="#69707D" text-anchor="middle">2024-05-02 00:00</text><line x1="928.5" x2="928.5" y1="724" y2="730" stroke="#D3D4D8"/><text x="928.5" y="741" font-size="11" fill="#69707D" text-anchor="middle">2024-05-02 12:00</text><line x1="1046.5" x2="1046.5" y1="724" y2="730" stroke="#D3D4D8"/><text x="1045.6" y="741" font-size="11" fill="#69707D" text-anchor="middle">2024-05-03 00:00</text><line x1="1163.5" x2="1163.5" y1="724" y2="730" stroke="#D3D4D8"/><text x="1162.7" y="741" font-size="11" fill="#69707D" text-anchor="middle">2024-05-03 12:00</text><line x1="1280.5" x2="1280.5" y1="724" y2="730" stroke="#D3D4D8"/><text x="1279.8" y="741" font-size="11" fill="#69707D" text-anchor="middle">2024-05-04 00:00</text><line x1="1397.5" x2="1397.5" y1="724" y2="730" stroke="#D3D4D8"/><text x="1396.9" y="741" font-size="11" fill="#69707D" text-anchor="middle">2024-05-04 12:00</text><line x1="1514.5" x2="1514.5" y1="724" y2="730" stroke="#D3D4D8"/><text x="1514.0" y="741" font-size="11" fill="#69707D" text-anchor="middle">2024-05-05 00:00</text><line x1="1631.5" x2="1631.5" y1="724" y2="730" stroke="#D3D4D8"/><text x="1631.1" y="741" font-size="11" fill="#69707D" text-anchor="middle">2024-05-05 12:00</text><line x1="80.5" x2="80.5" y1="724" y2="730" stroke="#D3D4D8"/><line x1="1747.5" x2="1747.5" y1="724" y2="730" stroke="#D3D4D8"/><text transform="translate(31 658.5) rotate(-90)" font-size="12.5" font-weight="bold" fill="#535966" text-anchor="middle">Count</text><text x="914" y="759" font-size="12.5" font-weight="bold" fill="#535966" text-anchor="middle">Timestamp</text></svg>
<div class="a" style="left:1756px;top:589.5px;width:12px;height:12px;border-radius:50%;background:#6092C0;opacity:.75"></div>
<div class="a" style="left:1774px;top:586.5px;font-size:11.7px;line-height:14px;color:#343741">164.312.c.1</div>
<div class="a" style="left:1756px;top:613.5px;width:12px;height:12px;border-radius:50%;background:#D36086;opacity:.75"></div>
<div class="a" style="left:1774px;top:610.5px;font-size:11.7px;line-height:14px;color:#343741">164.312.c.2</div>
<div class="a" style="left:1756px;top:637.5px;width:12px;height:12px;border-radius:50%;background:#9170B8;opacity:.75"></div>
<div class="a" style="left:1774px;top:634.5px;font-size:11.7px;line-height:14px;color:#343741">164.312.b</div>
<div class="a" style="left:1756px;top:661.5px;width:12px;height:12px;border-radius:50%;background:#CA8EAE;opacity:.75"></div>
<div class="a" style="left:1774px;top:658.5px;font-size:11.7px;line-height:14px;color:#343741">164.312.a.2.IV</div>
<div class="a" style="left:1756px;top:685.5px;width:12px;height:12px;border-radius:50%;background:#D6BF57;opacity:.75"></div>
<div class="a" style="left:1774px;top:682.5px;font-size:11.7px;line-height:14px;color:#343741">164.312.e.1</div>
</body></html>
